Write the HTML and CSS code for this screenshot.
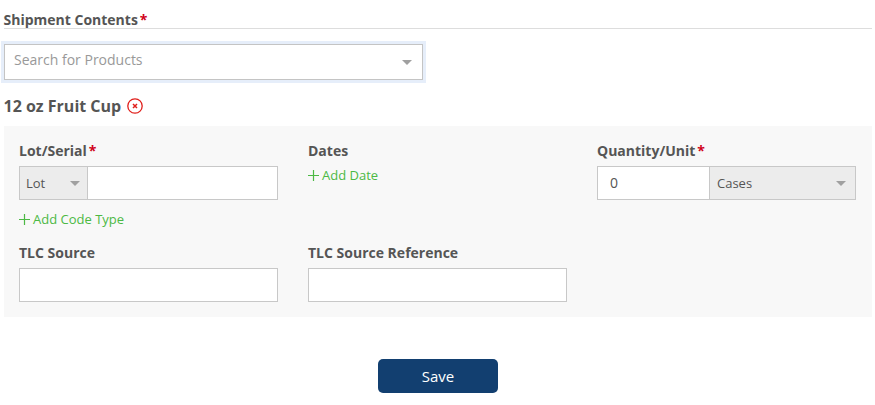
FILE: index.html
```html
<!DOCTYPE html>
<html>
<head>
	<meta charset="utf-8">
	<title>Shipment Contents</title>
	<link rel="stylesheet" href="styles.css">
</head>
<body>
	<div class="page">
		<div class="section-title">Shipment Contents<span class="req">*</span></div>
		<div class="search">
			<span class="search-text">Search for Products</span>
			<span class="caret"></span>
		</div>
		<div class="product">
			12 oz Fruit Cup
			<svg class="remove" width="16" height="16" viewBox="0 0 16 16">
				<circle cx="8" cy="8" r="7.2" fill="none" stroke="#e0201c" stroke-width="1.3"/>
				<path d="M6 6l4 4M10 6l-4 4" fill="none" stroke="#e0201c" stroke-width="1.5"/>
			</svg>
		</div>
		<div class="panel">
			<div class="field">
				<div class="label">Lot/Serial<span class="req">*</span></div>
				<div class="group">
					<div class="select select-lot">Lot<span class="caret"></span></div>
					<div class="input"></div>
				</div>
				<div class="add add-code">
					<svg class="plus" width="11" height="11" viewBox="0 0 11 11"><path d="M5.5 0v11M0 5.5h11" fill="none" stroke="#4cb944" stroke-width="1.2"/></svg>
					Add Code Type
				</div>
			</div>
			<div class="field">
				<div class="label">Dates</div>
				<div class="add">
					<svg class="plus" width="11" height="11" viewBox="0 0 11 11"><path d="M5.5 0v11M0 5.5h11" fill="none" stroke="#4cb944" stroke-width="1.2"/></svg>
					Add Date
				</div>
			</div>
			<div class="field">
				<div class="label">Quantity/Unit<span class="req">*</span></div>
				<div class="group">
					<div class="input input-qty">0</div>
					<div class="select select-unit">Cases<span class="caret"></span></div>
				</div>
			</div>
			<div class="field">
				<div class="label">TLC Source</div>
				<div class="group"><div class="input"></div></div>
			</div>
			<div class="field">
				<div class="label">TLC Source Reference</div>
				<div class="group"><div class="input"></div></div>
			</div>
		</div>
		<div class="actions">
			<button class="save" type="button">Save</button>
		</div>
	</div>
</body>
</html>
```

FILE: styles.css
```css
*{
	box-sizing: border-box;
	padding: 0;
	margin: 0;
}
body{
	font-family: "Open Sans", sans-serif;
	font-size: 13px;
	color: #555;
	background-color: #fff;
}
.page{
	padding: 11px 3px 0 4px;
}
.section-title{
	height: 18px;
	line-height: 17px;
	font-size: 14px;
	font-weight: 700;
	border-bottom: 1px solid #ddd;
}
.section-title, .product{
	text-indent: -0.5px;
}
.req{
	color: #d0021b;
	margin-left: 2px;
}
.search{
	display: flex;
	align-items: center;
	justify-content: space-between;
	width: 419px;
	height: 36px;
	margin-top: 15px;
	padding: 0 10px 5px 9px;
	background-color: #fff;
	border: 1px solid #c4c4c4;
	box-shadow: 0 0 0 3px #e6eefa;
	font-size: 14px;
	color: #999;
}
.caret{
	display: inline-block;
	width: 0;
	height: 0;
	border-left: 5.5px solid transparent;
	border-right: 5.5px solid transparent;
	border-top: 5px solid #a0a0a0;
}
.search .caret{
	margin-top: 6px;
}
.product{
	display: flex;
	align-items: center;
	gap: 6px;
	height: 22px;
	margin-top: 15px;
	margin-bottom: 1px;
	font-size: 16px;
	font-weight: 700;
}
.panel{
	display: grid;
	grid-template-columns: repeat(3, 259px);
	column-gap: 30px;
	grid-template-rows: 102px 65px;
	height: 191px;
	margin-top: 9px;
	padding: 15px 15px 0;
	background-color: #f8f8f8;
}
.label{
	height: 25px;
	line-height: 19px;
	font-size: 14px;
	font-weight: 700;
}
.group{
	display: flex;
	height: 34px;
	background-color: #fff;
	border: 1px solid #c8c8c8;
}
.input{
	flex: 1;
	line-height: 32px;
}
.input-qty{
	flex: none;
	width: 112px;
	padding-left: 12px;
	font-size: 14px;
	border-right: 1px solid #c8c8c8;
}
.select{
	display: flex;
	align-items: center;
	justify-content: space-between;
	background-color: #ececec;
	padding: 0 7px 0 6px;
}
.select-lot{
	width: 68px;
	border-right: 1px solid #c8c8c8;
}
.select-unit{
	flex: 1;
	padding-right: 9px;
	padding-left: 7px;
}
.add{
	display: flex;
	align-items: center;
	gap: 3px;
	color: #4cb944;
	line-height: 18px;
}
.add-code{
	margin-top: 10px;
}
.actions{
	display: flex;
	justify-content: center;
	margin-top: 42px;
}
.save{
	width: 120px;
	height: 34px;
	background-color: #123f70;
	border: none;
	border-radius: 5px;
	color: #fff;
	font-family: "Open Sans", sans-serif;
	font-size: 15px;
}
```
